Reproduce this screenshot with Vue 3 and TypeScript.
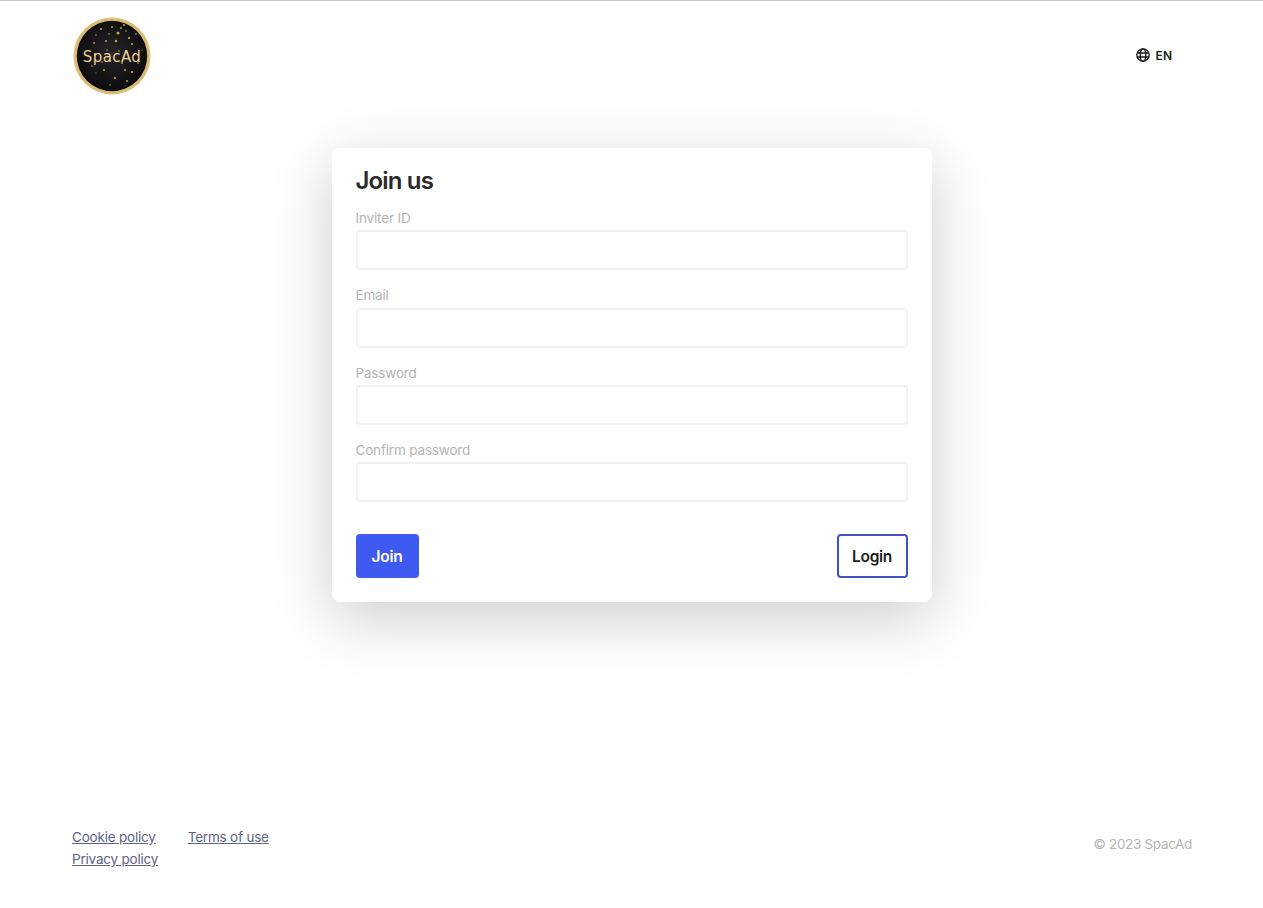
<script setup lang="ts">
const fields: string[] = ['Inviter ID', 'Email', 'Password', 'Confirm password']
const stars: [number, number, number][] = [
  [24,19,.8],[29,13,1],[34,25,1],[40,11,.9],[46,17,1.5],[52,9,1],[57,22,1.1],[44,25,1.2],[22,27,.9],[60,28,1],[37,18,.8],[64,18,.8],[49,12,.9],[54,15,.8],
  [20,50,.8],[32,54,1],[43,62,1.1],[53,54,1],[60,56,1.1],[50,47,.9],[30,46,.8],[66,47,.8],[38,69,.7],[55,65,.9],[24,57,.6],[47,35,.8],[35,34,.7],[70,34,.6]
]
</script>

<template>
  <div class="page">
    <header class="header">
      <svg class="logo" viewBox="0 0 80 80" role="img" aria-label="SpacAd">
        <defs>
          <radialGradient id="disc" cx="50%" cy="45%" r="55%">
            <stop offset="0" stop-color="#262628" />
            <stop offset="1" stop-color="#0c0c0e" />
          </radialGradient>
        </defs>
        <circle cx="40" cy="40" r="38.5" fill="#dcbd76" />
        <circle cx="40" cy="40" r="35.2" fill="url(#disc)" />
        <circle v-for="(s, i) in stars" :key="i" :cx="s[0]" :cy="s[1]" :r="s[2]" fill="#d4a544" />
        <text x="40" y="46" text-anchor="middle" class="logo-text">SpacAd</text>
      </svg>
      <div class="lang">
        <svg class="globe" viewBox="0 0 14 14" fill="none" stroke="#1b1b1b" stroke-width="1.35">
          <circle cx="7" cy="7" r="6.2" />
          <ellipse cx="7" cy="7" rx="2.8" ry="6.2" />
          <path d="M1 5h12M1 9h12" />
        </svg>
        <span>EN</span>
      </div>
    </header>

    <main class="main">
      <form class="card" @submit.prevent>
        <h1 class="title">Join us</h1>
        <div v-for="f in fields" :key="f" class="field">
          <label class="label">{{ f }}</label>
          <input class="input" type="text" />
        </div>
        <div class="actions">
          <button class="btn primary" type="submit">Join</button>
          <button class="btn outline" type="button">Login</button>
        </div>
      </form>
    </main>

    <footer class="footer">
      <div class="links">
        <a href="#">Cookie policy</a>
        <a href="#">Terms of use</a>
        <a href="#">Privacy policy</a>
      </div>
      <div class="copy">© 2023 SpacAd</div>
    </footer>
  </div>
</template>

<style>
html, body { margin: 0; background: #fff; }
</style>

<style scoped>
.page {
  box-sizing: border-box;
  min-height: 908px;
  display: flex;
  flex-direction: column;
  border-top: 1px solid #c9c9c9;
  font-family: Inter, "Liberation Sans", sans-serif;
  color: #262626;
}
.header {
  display: flex;
  justify-content: space-between;
  align-items: center;
  padding: 15px 91px 0 72px;
}
.logo { width: 80px; height: 80px; display: block; }
.logo-text {
  font-family: "DejaVu Sans", sans-serif;
  font-size: 15px;
  fill: #ecd094;
  letter-spacing: .4px;
}
.lang {
  display: flex;
  align-items: center;
  gap: 6px;
  margin-bottom: 2px;
  font-size: 12px;
  font-weight: 600;
  color: #1b1b1b;
}
.globe { width: 14px; height: 14px; }
.main {
  display: flex;
  justify-content: center;
  padding-top: 52px;
}
.card {
  box-sizing: border-box;
  width: 600px;
  height: 454px;
  padding: 17px 24px 24px;
  background: #fff;
  border-radius: 8px;
  box-shadow: 0 16px 64px rgba(0, 0, 0, .2);
}
.title {
  margin: 0 0 12.15px;
  font-size: 24px;
  line-height: 32px;
  font-weight: 600;
  letter-spacing: -.85px;
  color: #2a2a2a;
}
.field { margin-bottom: 16px; }
.label {
  display: block;
  height: 21.25px;
  font-size: 13.5px;
  line-height: 19px;
  letter-spacing: -.17px;
  color: #b4b4b4;
}
.input {
  display: block;
  box-sizing: border-box;
  width: 100%;
  height: 40px;
  border: 2px solid #f2f2f2;
  border-radius: 4px;
  background: #fff;
  outline: none;
}
.actions {
  display: flex;
  justify-content: space-between;
  margin-top: 32px;
}
.btn {
  box-sizing: border-box;
  height: 44px;
  padding: 1px 0 0;
  border-radius: 4px;
  font-family: inherit;
  font-size: 15.5px;
  font-weight: 600;
  letter-spacing: -.3px;
  cursor: pointer;
}
.primary {
  width: 63px;
  border: none;
  background: #3f5af0;
  color: #fff;
}
.outline {
  width: 71px;
  border: 2px solid #3f51c5;
  background: #fff;
  color: #1b1b1b;
}
.footer {
  margin-top: auto;
  display: flex;
  justify-content: space-between;
  align-items: center;
  padding: 0 71px 38px 72px;
  font-size: 13.5px;
  line-height: 22px;
  letter-spacing: -.2px;
}
.links {
  display: flex;
  flex-wrap: wrap;
  column-gap: 32px;
  width: 240px;
}
.links a { color: #5c6388; text-decoration: underline; }
.copy { padding-bottom: 8px; letter-spacing: -.33px; color: #b4b4b4; }
</style>
